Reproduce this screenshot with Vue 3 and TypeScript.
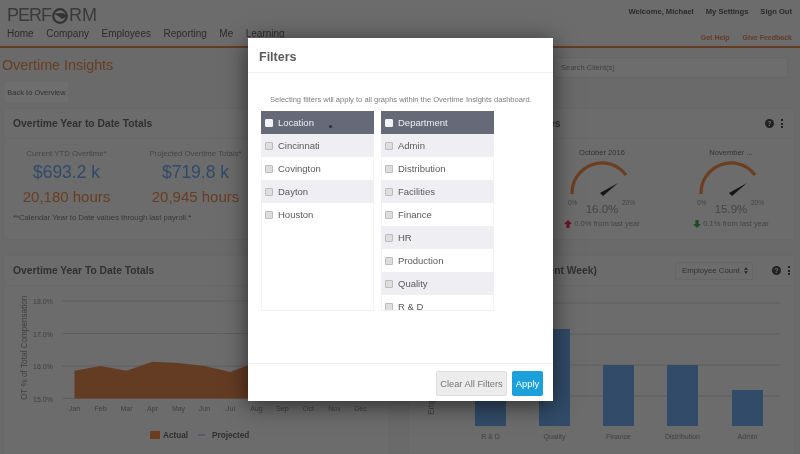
<script setup lang="ts">
const navItems = ['Home', 'Company', 'Employees', 'Reporting', 'Me', 'Learning']
const locations = ['Cincinnati', 'Covington', 'Dayton', 'Houston']
const departments = ['Admin', 'Distribution', 'Facilities', 'Finance', 'HR', 'Production', 'Quality', 'R & D']

const stats = [
  { label: 'Current YTD Overtime*', money: '$693.2 k', hours: '20,180 hours' },
  { label: 'Projected Overtime Totals*', money: '$719.8 k', hours: '20,945 hours' },
]

const gauges = [
  { month: 'October 2016', value: '16.0%', delta: '0.0% from last year', up: true },
  { month: 'November ...', value: '15.9%', delta: '0.1% from last year', up: false },
]

const months = ['Jan', 'Feb', 'Mar', 'Apr', 'May', 'Jun', 'Jul', 'Aug', 'Sep', 'Oct', 'Nov', 'Dec']
const yTicks = [
  { label: '18.0%', y: 15 },
  { label: '17.0%', y: 47.5 },
  { label: '16.0%', y: 80 },
  { label: '15.0%', y: 112.5 },
]
const monthX = (i: number) => 70.5 + i * 26

const bars = [
  { label: 'R & D', x: 66, top: 43 },
  { label: 'Quality', x: 130, top: 43 },
  { label: 'Finance', x: 194, top: 79 },
  { label: 'Distribution', x: 258, top: 79 },
  { label: 'Admin', x: 323, top: 104 },
]
</script>

<template>
  <div class="page">
    <div class="dashboard">
      <header class="topbar">
        <div class="brand-side">
          <div class="logo">
            PERF<svg viewBox="0 0 18 16" width="18" height="16">
              <circle cx="9" cy="8" r="6.8" fill="none" stroke="#333" stroke-width="2.2" />
              <path d="M3 5.5 L12 5 L17 8 L11 11 L7 8 Z" fill="#333" />
            </svg><span class="logo-end">RM</span>
          </div>
          <nav class="nav">
            <span v-for="item in navItems" :key="item">{{ item }}</span>
          </nav>
        </div>
        <div class="user-side">
          <div class="user-links">
            <span>Welcome, Michael</span><span>My Settings</span><span>Sign Out</span>
          </div>
          <div class="help-links">
            <span>Get Help</span><span>Give Feedback</span>
          </div>
        </div>
      </header>

      <div class="title-row">
        <div>
          <h1>Overtime Insights</h1>
          <button class="back">Back to Overview</button>
        </div>
        <div class="search">Search Client(s)</div>
      </div>

      <div class="cards">
        <section class="card top-card">
          <div class="card-head"><h2>Overtime Year to Date Totals</h2></div>
          <div class="stats">
            <div v-for="s in stats" :key="s.label" class="stat">
              <div class="stat-label">{{ s.label }}</div>
              <div class="stat-money">{{ s.money }}</div>
              <div class="stat-hours">{{ s.hours }}</div>
            </div>
          </div>
          <p class="footnote">**Calendar Year to Date values through last payroll.*</p>
        </section>

        <section class="card top-card">
          <div class="card-head">
            <h2>Overtime Month Percentages</h2>
            <div class="card-tools shifted">
              <span class="help-dot">?</span>
              <span class="kebab"><i></i><i></i><i></i></span>
            </div>
          </div>
          <div class="gauges">
            <div v-for="g in gauges" :key="g.month" class="gauge">
              <div class="gauge-month">{{ g.month }}</div>
              <svg viewBox="0 0 80 50" width="80" height="50">
                <path d="M10 36 A 30 30 0 0 1 64 17" fill="none" stroke="#6c3e20" stroke-width="3.2" />
                <path d="M38 35 L56 25 L41 38 Z" fill="#161616" />
                <text x="6" y="47" class="gauge-end">0%</text>
                <text x="60" y="47" class="gauge-end">20%</text>
              </svg>
              <div class="gauge-value">{{ g.value }}</div>
              <div class="gauge-delta">
                <svg viewBox="0 0 10 10" width="8" height="8">
                  <path v-if="g.up" d="M5 0 L10 5 L7 5 L7 10 L3 10 L3 5 L0 5 Z" fill="#6a1620" />
                  <path v-else d="M5 10 L10 5 L7 5 L7 0 L3 0 L3 5 L0 5 Z" fill="#1c5024" />
                </svg>
                {{ g.delta }}
              </div>
            </div>
          </div>
        </section>

        <section class="card bottom-card">
          <div class="card-head"><h2>Overtime Year To Date Totals</h2></div>
          <svg class="chart" viewBox="0 0 387 168" width="387" height="168">
            <text class="axis-title" transform="translate(23 114) rotate(-90)">OT % of Total Compensation</text>
            <g v-for="t in yTicks" :key="t.label">
              <line x1="58" x2="385" :y1="t.y" :y2="t.y" stroke="#5f5f5f" />
              <text x="29" :y="t.y + 3" class="tick">{{ t.label }}</text>
            </g>
            <path d="M70.5 84.7 L96.5 80 L122.5 84.7 L148.5 75.7 L174.5 77 L200.5 80 L226.5 86 L252.5 76 L278.5 74 L278.5 112.5 L70.5 112.5 Z" fill="#643c23" />
            <text v-for="(m, i) in months" :key="m" :x="monthX(i)" y="125" text-anchor="middle" class="tick">{{ m }}</text>
            <rect x="146" y="145" width="10" height="8" fill="#6c3e20" />
            <text x="159" y="152" class="legend">Actual</text>
            <line x1="194" x2="201" y1="149" y2="149" stroke="#44486a" />
            <text x="208" y="152" class="legend">Projected</text>
          </svg>
        </section>

        <section class="card bottom-card">
          <div class="card-head tight">
            <h2>Overtime by Division (Current Week)</h2>
            <div class="card-tools">
              <div class="select">
                Employee Count
                <svg class="carets" viewBox="0 0 5 8" width="4" height="7">
                  <path d="M2.5 0 L5 3 L0 3 Z M2.5 8 L5 5 L0 5 Z" fill="#222" />
                </svg>
              </div>
              <span class="help-dot">?</span>
              <span class="kebab"><i></i><i></i><i></i></span>
            </div>
          </div>
          <svg class="chart" viewBox="0 0 387 168" width="387" height="168">
            <text class="axis-title" transform="translate(25 129) rotate(-90)">Employees</text>
            <line v-for="y in [17, 48, 79, 110]" :key="y" x1="40" x2="371" :y1="y" :y2="y" stroke="#5f5f5f" />
            <g v-for="b in bars" :key="b.label">
              <rect :x="b.x" :y="b.top" width="31" :height="140 - b.top" fill="#324b69" />
              <text :x="b.x + 15.5" y="153" text-anchor="middle" class="tick">{{ b.label }}</text>
            </g>
          </svg>
        </section>
      </div>
    </div>

    <div class="modal">
      <div class="modal-head">Filters</div>
      <div class="modal-body">
        <p class="hint">Selecting filters will apply to all graphs within the Overtime Insights dashboard.</p>
        <div class="lists">
          <ul class="list">
            <li class="list-head"><input type="checkbox" />Location</li>
            <li v-for="l in locations" :key="l"><input type="checkbox" />{{ l }}</li>
          </ul>
          <ul class="list">
            <li class="list-head"><input type="checkbox" />Department</li>
            <li v-for="d in departments" :key="d"><input type="checkbox" />{{ d }}</li>
          </ul>
        </div>
      </div>
      <div class="modal-foot">
        <button class="clear">Clear All Filters</button>
        <button class="apply">Apply</button>
      </div>
      <span class="cursor"></span>
    </div>
  </div>
</template>

<style>
html,
body {
  margin: 0;
  background: #6a6a6a;
}
</style>

<style scoped>
.page {
  position: relative;
  width: 800px;
  height: 454px;
  overflow: hidden;
  background: #6a6a6a;
  font-family: 'Liberation Sans', Arial, sans-serif;
  color: #2f2f2f;
  filter: blur(0.35px);
}

.topbar {
  display: flex;
  justify-content: space-between;
  height: 46px;
  padding: 0 8px 0 7px;
  border-bottom: 2px solid #643c23;
  background: #6c6c6c;
}

.logo {
  display: flex;
  align-items: center;
  height: 19px;
  margin-top: 6px;
  font-size: 18px;
  letter-spacing: -1px;
  color: #3a3a3a;
}

.logo-end {
  letter-spacing: 0;
}

.nav {
  display: flex;
  gap: 12.5px;
  margin-top: 2px;
  font-size: 10px;
  line-height: 14px;
  color: #2c2c2c;
}

.user-links,
.help-links {
  display: flex;
  justify-content: flex-end;
  font-weight: bold;
}

.user-links {
  gap: 12px;
  margin-top: 6px;
  font-size: 7.6px;
  line-height: 11px;
  color: #2a2a2a;
}

.help-links {
  gap: 13px;
  margin-top: 15px;
  font-size: 7px;
  line-height: 11px;
  color: #643c28;
}

.title-row {
  display: flex;
  justify-content: space-between;
  padding: 9px 12px 0 2px;
  height: 51px;
}

h1 {
  margin: 0;
  font-size: 14.3px;
  font-weight: normal;
  line-height: 17px;
  color: #6a3d20;
}

.back {
  display: block;
  margin: 8px 0 0 3px;
  width: 63px;
  height: 20px;
  padding: 0;
  border: none;
  background: #6e6e6e;
  font-family: inherit;
  font-size: 7.5px;
  color: #333;
}

.search {
  width: 226px;
  height: 19px;
  padding-left: 7px;
  border: 1px solid #666;
  border-radius: 2px;
  background: #6d6d6d;
  font-size: 7.5px;
  line-height: 19px;
  color: #404040;
}

.cards {
  display: grid;
  grid-template-columns: 387px 387px;
  grid-template-rows: 132px 200px;
  gap: 15px 18px;
  padding-left: 3px;
}

.card {
  background: #6c6c6c;
  border: 1px solid #686868;
  overflow: hidden;
}

.card-head {
  display: flex;
  align-items: center;
  justify-content: space-between;
  height: 29px;
  padding: 0 7px 0 9px;
  border-bottom: 1px solid #686868;
}

.card-head.tight {
  padding-right: 4px;
}

h2 {
  margin: 0;
  font-size: 10.3px;
  font-weight: bold;
  color: #303030;
  white-space: nowrap;
}

.card-tools {
  display: flex;
  align-items: center;
  gap: 7px;
}

.card-tools.shifted {
  margin-right: 4px;
}

.help-dot {
  width: 9px;
  height: 9px;
  border-radius: 50%;
  background: #222;
  color: #6f6f6f;
  font-size: 7px;
  font-weight: bold;
  line-height: 9px;
  text-align: center;
}

.kebab {
  display: flex;
  flex-direction: column;
  gap: 1.5px;
}

.kebab i {
  display: block;
  width: 2px;
  height: 2px;
  background: #222;
}

.select {
  position: relative;
  width: 70px;
  height: 16px;
  padding-left: 6px;
  margin-right: 12px;
  border: 1px solid #666;
  border-radius: 2px;
  font-size: 7.8px;
  line-height: 16px;
  color: #333;
}

.carets {
  position: absolute;
  right: 4px;
  top: 4px;
}

.stats {
  display: flex;
  padding-top: 10px;
}

.stat {
  width: 129px;
  text-align: center;
}

.stat:first-child {
  margin-left: -2px;
}

.stat-label {
  font-size: 7.8px;
  line-height: 10px;
  color: #454545;
}

.stat-money {
  margin-top: 3px;
  font-size: 17.5px;
  line-height: 21px;
  color: #2f4a6a;
}

.stat-hours {
  margin-top: 4px;
  font-size: 15px;
  line-height: 19px;
  color: #6a3d20;
}

.footnote {
  margin: 7px 0 0 9px;
  font-size: 7.7px;
  line-height: 10px;
  color: #383838;
}

.gauges {
  display: flex;
  padding: 8px 0 0 153px;
  gap: 49px;
}

.gauge {
  width: 80px;
  text-align: center;
}

.gauge-month {
  font-size: 7.6px;
  line-height: 11px;
  color: #333;
}

.gauge svg {
  display: block;
}

.gauge-end {
  font-size: 6.5px;
  fill: #444;
}

.gauge-value {
  margin-top: -7px;
  font-size: 11.5px;
  line-height: 16px;
  color: #454545;
}

.gauge-delta {
  display: flex;
  justify-content: center;
  align-items: center;
  gap: 2px;
  margin-top: 2px;
  font-size: 7.6px;
  white-space: nowrap;
  color: #454545;
}

.gauge-delta svg {
  flex: none;
}

.chart {
  display: block;
  font-family: 'Liberation Sans', Arial, sans-serif;
}

.tick {
  font-size: 7px;
  fill: #404040;
}

.axis-title {
  font-size: 8.2px;
  fill: #404040;
}

.legend {
  font-size: 8.2px;
  font-weight: bold;
  fill: #2e2e2e;
}

/* dialog sits over the dashboard */
.modal {
  position: absolute;
  left: 248px;
  top: 38px;
  width: 305px;
  height: 363px;
  display: flex;
  flex-direction: column;
  background: #fff;
  box-shadow: 0 4px 22px rgba(0, 0, 0, 0.6);
  color: #555;
}

.modal-head {
  flex: none;
  height: 34px;
  padding-left: 11px;
  border-bottom: 1px solid #f1f1f1;
  font-size: 12.5px;
  font-weight: bold;
  line-height: 38px;
  color: #5b5b5b;
}

.modal-body {
  flex: 1;
}

.hint {
  margin: 22px 0 0;
  padding-left: 22px;
  font-size: 7.55px;
  line-height: 10px;
  color: #7d7d7d;
  white-space: nowrap;
}

.lists {
  display: flex;
  gap: 7px;
  margin: 6px 0 0 13px;
}

.list {
  width: 113px;
  height: 199px;
  margin: 0;
  padding: 0;
  overflow: hidden;
  list-style: none;
  border-bottom: 1px solid #f2f2f2;
  box-shadow: inset 1px 0 0 #f4f4f4, inset -1px 0 0 #f4f4f4;
}

.list li {
  display: flex;
  align-items: center;
  height: 23px;
  font-size: 9.5px;
  color: #5a5a5a;
}

.list li:nth-child(even) {
  background: #efeff3;
}

.list .list-head {
  background: #666a78;
  color: #eceef2;
}

.list input {
  appearance: none;
  flex: none;
  width: 8px;
  height: 8px;
  margin: 0 5px 0 4px;
  border: 1px solid #bdbdbd;
  border-radius: 1px;
  background: #dedede;
}

.list-head input {
  background: #f2f2f4;
  border-color: #f2f2f4;
}

.modal-foot {
  flex: none;
  display: flex;
  justify-content: flex-end;
  gap: 5px;
  height: 38px;
  padding: 7px 10px 0 0;
  box-sizing: border-box;
  border-top: 1px solid #eee;
}

.modal-foot button {
  height: 25px;
  padding: 0;
  font-family: inherit;
  font-size: 9.3px;
  border-radius: 2px;
}

.clear {
  width: 71px;
  border: 1px solid #ddd;
  background: #ececec;
  color: #777;
}

.apply {
  width: 31px;
  border: none;
  background: #1ca0dc;
  color: #fff;
}

.cursor {
  position: absolute;
  left: 81px;
  top: 87px;
  width: 3px;
  height: 3px;
  border-radius: 50%;
  background: #2b2f3a;
}
</style>
